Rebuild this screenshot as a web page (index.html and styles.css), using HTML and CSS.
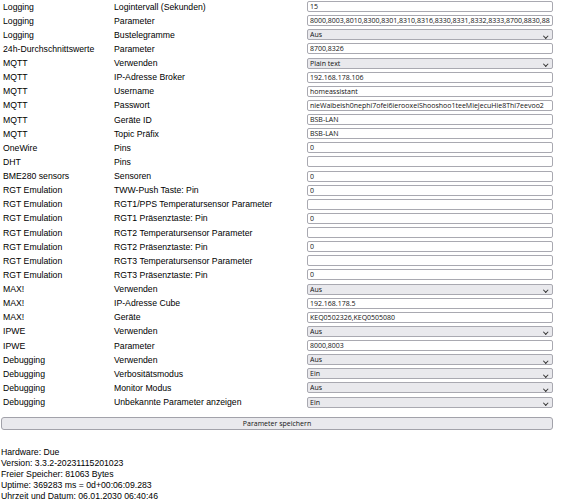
FILE: index.html
```html
<!DOCTYPE html>
<html lang="de">
<head>
  <meta charset="UTF-8" />
  <title>BSB-LAN – Einstellungen</title>
  <link rel="stylesheet" href="styles.css">
</head>
<body>
  <form id="config-form">
    <!-- Configuration table: category, parameter, value -->
    <div class="settings">
      <div class="cat">Logging</div><div class="name">Logintervall (Sekunden)</div>
      <div class="field"><input type="text" value="15"></div>

      <div class="cat">Logging</div><div class="name">Parameter</div>
      <div class="field"><input type="text" value="8000,8003,8010,8300,8301,8310,8316,8330,8331,8332,8333,8700,8830,8850,8851"></div>

      <div class="cat">Logging</div><div class="name">Bustelegramme</div>
      <div class="field select-wrap"><select><option>Aus</option><option>Ein</option></select></div>

      <div class="cat">24h-Durchschnittswerte</div><div class="name">Parameter</div>
      <div class="field"><input type="text" value="8700,8326"></div>

      <div class="cat">MQTT</div><div class="name">Verwenden</div>
      <div class="field select-wrap"><select><option>Plain text</option><option>JSON</option><option>Aus</option></select></div>

      <div class="cat">MQTT</div><div class="name">IP-Adresse Broker</div>
      <div class="field"><input type="text" value="192.168.178.106"></div>

      <div class="cat">MQTT</div><div class="name">Username</div>
      <div class="field"><input type="text" value="homeassistant"></div>

      <div class="cat">MQTT</div><div class="name">Passwort</div>
      <div class="field"><input type="text" value="nieWaibeish0nephi7ofei6ierooxeiShooshoo1teeMieJecuHie8Thi7eevoo2"></div>

      <div class="cat">MQTT</div><div class="name">Geräte ID</div>
      <div class="field"><input type="text" value="BSB-LAN"></div>

      <div class="cat">MQTT</div><div class="name">Topic Präfix</div>
      <div class="field"><input type="text" value="BSB-LAN"></div>

      <div class="cat">OneWire</div><div class="name">Pins</div>
      <div class="field"><input type="text" value="0"></div>

      <div class="cat">DHT</div><div class="name">Pins</div>
      <div class="field"><input type="text" value=""></div>

      <div class="cat">BME280 sensors</div><div class="name">Sensoren</div>
      <div class="field"><input type="text" value="0"></div>

      <div class="cat">RGT Emulation</div><div class="name">TWW-Push Taste: Pin</div>
      <div class="field"><input type="text" value="0"></div>

      <div class="cat">RGT Emulation</div><div class="name">RGT1/PPS Temperatursensor Parameter</div>
      <div class="field"><input type="text" value=""></div>

      <div class="cat">RGT Emulation</div><div class="name">RGT1 Präsenztaste: Pin</div>
      <div class="field"><input type="text" value="0"></div>

      <div class="cat">RGT Emulation</div><div class="name">RGT2 Temperatursensor Parameter</div>
      <div class="field"><input type="text" value=""></div>

      <div class="cat">RGT Emulation</div><div class="name">RGT2 Präsenztaste: Pin</div>
      <div class="field"><input type="text" value="0"></div>

      <div class="cat">RGT Emulation</div><div class="name">RGT3 Temperatursensor Parameter</div>
      <div class="field"><input type="text" value=""></div>

      <div class="cat">RGT Emulation</div><div class="name">RGT3 Präsenztaste: Pin</div>
      <div class="field"><input type="text" value="0"></div>

      <div class="cat">MAX!</div><div class="name">Verwenden</div>
      <div class="field select-wrap"><select><option>Aus</option><option>Ein</option></select></div>

      <div class="cat">MAX!</div><div class="name">IP-Adresse Cube</div>
      <div class="field"><input type="text" value="192.168.178.5"></div>

      <div class="cat">MAX!</div><div class="name">Geräte</div>
      <div class="field"><input type="text" value="KEQ0502326,KEQ0505080"></div>

      <div class="cat">IPWE</div><div class="name">Verwenden</div>
      <div class="field select-wrap"><select><option>Aus</option><option>Ein</option></select></div>

      <div class="cat">IPWE</div><div class="name">Parameter</div>
      <div class="field"><input type="text" value="8000,8003"></div>

      <div class="cat">Debugging</div><div class="name">Verwenden</div>
      <div class="field select-wrap"><select><option>Aus</option><option>Seriell</option><option>Telnet</option></select></div>

      <div class="cat">Debugging</div><div class="name">Verbositätsmodus</div>
      <div class="field select-wrap"><select><option>Ein</option><option>Aus</option></select></div>

      <div class="cat">Debugging</div><div class="name">Monitor Modus</div>
      <div class="field select-wrap"><select><option>Aus</option><option>Ein</option></select></div>

      <div class="cat">Debugging</div><div class="name">Unbekannte Parameter anzeigen</div>
      <div class="field select-wrap"><select><option>Ein</option><option>Aus</option></select></div>
    </div>

    <button type="submit" class="save-btn">Parameter speichern</button>
  </form>

  <!-- Device status -->
  <div class="status">
    Hardware: Due<br>
    Version: 3.3.2-20231115201023<br>
    Freier Speicher: 81063 Bytes<br>
    Uptime: 369283 ms = 0d+00:06:09.283<br>
    Uhrzeit und Datum: 06.01.2030 06:40:46
  </div>
</body>
</html>
```

FILE: styles.css
```css
* {
  margin: 0;
  padding: 0;
  box-sizing: border-box;
}
body {
  background-color: #ffffff;
  color: #000000;
  font-family: "Liberation Sans", Arial, sans-serif;
  font-size: 8.7px;
  padding: 0 1px;
}
#config-form {
  width: 552px;
}
/* settings table */
.settings {
  display: grid;
  grid-template-columns: 111px 193px 248px;
  grid-auto-rows: 14.14px;
  align-items: center;
  margin-top: -0.5px;
}
.cat,
.name,
.field {
  padding-left: 2px;
  white-space: nowrap;
}
.field {
  position: relative;
  display: flex;
  align-items: center;
}
.field input,
.field select {
  width: 100%;
  height: 11px;
  border: 1px solid #a9a9b1;
  border-radius: 2px;
  font-family: "Open Sans", "DejaVu Sans", sans-serif;
  font-size: 7px;
  font-weight: 500;
  color: #111111;
  padding: 0 2px;
  line-height: 9px;
  outline: none;
}
.field input {
  background-color: #ffffff;
}
.field select {
  appearance: none;
  -webkit-appearance: none;
  background-color: #e9e9ed;
}
/* little chevron on the right of each dropdown */
.select-wrap::after {
  content: "";
  position: absolute;
  right: 6px;
  top: 4.5px;
  width: 2.5px;
  height: 2.5px;
  border-right: 1px solid #333333;
  border-bottom: 1px solid #333333;
  transform: rotate(45deg);
  pointer-events: none;
}
.save-btn {
  display: block;
  width: 552px;
  height: 13px;
  margin-top: 8px;
  background-color: #e9e9ed;
  border: 1px solid #a2a2aa;
  border-radius: 3px;
  font-family: "Open Sans", "DejaVu Sans", sans-serif;
  font-size: 7px;
  font-weight: 500;
  color: #111111;
  line-height: 10px;
}
/* device info below the form */
.status {
  margin-top: 17px;
  line-height: 11px;
  color: #000000;
}
```
